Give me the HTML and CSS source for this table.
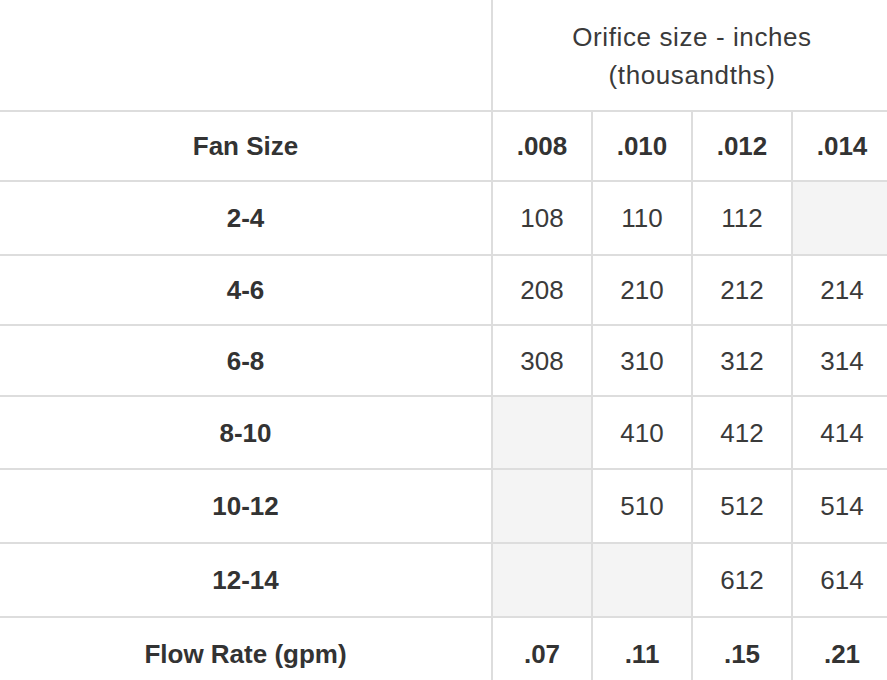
FILE: index.html
```html
<!DOCTYPE html>
<html>
<head>
<meta charset="utf-8">
<link rel="stylesheet" href="styles.css">
</head>
<body>
<div class="wrap">
<table class="grid">
  <colgroup>
    <col class="c-label">
    <col class="c-num">
    <col class="c-num">
    <col class="c-num">
    <col class="c-num">
  </colgroup>
  <tr class="r-head">
    <td class="first"></td>
    <td colspan="4" class="title">Orifice size - inches<br>(thousandths)</td>
  </tr>
  <tr class="h70">
    <th class="first">Fan Size</th>
    <th>.008</th><th>.010</th><th>.012</th><th>.014</th>
  </tr>
  <tr class="h74">
    <th class="first">2-4</th>
    <td>108</td><td>110</td><td>112</td><td class="empty"></td>
  </tr>
  <tr class="h70">
    <th class="first">4-6</th>
    <td>208</td><td>210</td><td>212</td><td>214</td>
  </tr>
  <tr class="h71">
    <th class="first">6-8</th>
    <td>308</td><td>310</td><td>312</td><td>314</td>
  </tr>
  <tr class="h73">
    <th class="first">8-10</th>
    <td class="empty"></td><td>410</td><td>412</td><td>414</td>
  </tr>
  <tr class="h74">
    <th class="first">10-12</th>
    <td class="empty"></td><td>510</td><td>512</td><td>514</td>
  </tr>
  <tr class="h74">
    <th class="first">12-14</th>
    <td class="empty"></td><td class="empty"></td><td>612</td><td>614</td>
  </tr>
  <tr class="h74">
    <th class="first">Flow Rate (gpm)</th>
    <th>.07</th><th>.11</th><th>.15</th><th>.21</th>
  </tr>
</table>
</div>
</body>
</html>
```
FILE: styles.css
```css
html, body {
  margin: 0;
  padding: 0;
  overflow: hidden;
  background: #fff;
}

.wrap {
  width: 887px;
  height: 680px;
  overflow: hidden;
}

.grid {
  border-collapse: separate;
  border-spacing: 0;
  table-layout: fixed;
  width: 891px;
  font-family: "Liberation Sans", Arial, Helvetica, sans-serif;
  font-size: 26px;
  color: #333;
}

.c-label { width: 491px; }
.c-num { width: 100px; }

.grid td,
.grid th {
  padding: 0;
  text-align: center;
  vertical-align: middle;
  border-bottom: 2px solid #ddd;
  border-left: 2px solid #ddd;
  line-height: 36px;
}

.grid th { font-weight: bold; }
.grid td { font-weight: normal; color: #3a3a3a; }

.grid .first { border-left: none; }

.grid .empty { background: #f4f4f4; }

.grid .title {
  font-size: 26px;
  letter-spacing: 0.6px;
  line-height: 38px;
  padding-top: 2px;
}

.r-head { height: 112px; }
.h70 { height: 70px; }
.h71 { height: 71px; }
.h73 { height: 73px; }
.h74 { height: 74px; }
```
